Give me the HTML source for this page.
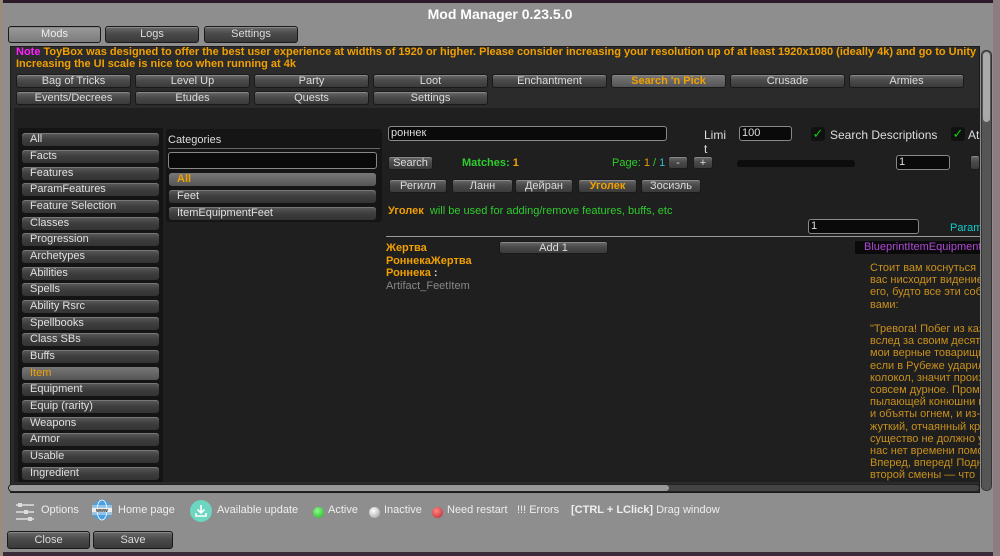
<!DOCTYPE html><html><head><meta charset="utf-8"><style>
*{margin:0;padding:0;box-sizing:border-box}
body{width:1000px;height:556px;overflow:hidden;background:#3a2a3a;font-family:"Liberation Sans","DejaVu Sans",sans-serif;font-size:11px;position:relative}
.a{position:absolute;white-space:nowrap}
.b{position:absolute;background:linear-gradient(#6a6a6a,#4a4a4a 45%,#3a3a3a);border:1px solid #1a1a1a;border-radius:3px;color:#ddd;text-align:center;font-size:11px;line-height:12px;box-shadow:inset 0 1px 0 #888}
.li{position:absolute;left:22px;width:137px;height:13px;background:linear-gradient(#5a5a5a,#3e3e3e 50%,#333);border-radius:3px;color:#e0e0e0;font-size:11px;line-height:13px;padding-left:8px;box-shadow:inset 0 1px 0 #777}
.inp{position:absolute;background:#0a0a0a;border:1px solid #888;border-radius:3px;color:#ddd;font-size:11px;line-height:12px;padding-left:2px}
.o{color:#f0a000}
.g{color:#2ecc2e}
</style></head><body>
<div class="a" style="left:0;top:0;width:1000px;height:4px;background:#2a1a2a"></div>
<div class="a" style="left:0;top:0;width:3px;height:556px;background:#9a8c7a"></div>
<div class="a" style="left:993px;top:0;width:7px;height:556px;background:#8c7c80"></div>
<div class="a" style="left:3px;top:3px;width:990px;height:549px;background:#8e8e8e"></div>
<div class="a" style="left:0;top:6px;width:1000px;text-align:center;color:#fff;font-weight:bold;font-size:14px">Mod Manager 0.23.5.0</div>
<div class="b" style="left:8px;top:26px;width:93px;height:17px;line-height:15px;background:linear-gradient(#9a9a9a,#7c7c7c);color:#eee">Mods</div>
<div class="b" style="left:105px;top:26px;width:94px;height:17px;line-height:15px">Logs</div>
<div class="b" style="left:204px;top:26px;width:94px;height:17px;line-height:15px">Settings</div>
<div class="a" style="left:10px;top:46px;width:970px;height:447px;background:#2b2b2b;border:1px solid #1a1a1a"></div>
<div class="a" style="left:981px;top:50px;width:11px;height:441px;background:#555;border-radius:5px;border:1px solid #333"></div>
<div class="a" style="left:983px;top:52px;width:7px;height:70px;background:#aaa;border-radius:4px"></div>
<div class="a" style="left:16px;top:47px;width:962px;overflow:hidden;font-weight:bold;color:#f0a000;font-size:11px;line-height:11.5px"><span style="color:#ff20ff">Note</span> ToyBox was designed to offer the best user experience at widths of 1920 or higher. Please consider increasing your resolution up of at least 1920x1080 (ideally 4k) and go to Unity<br>Increasing the UI scale is nice too when running at 4k</div>
<div class="b" style="left:16px;top:74px;width:115px;height:14px">Bag of Tricks</div>
<div class="b" style="left:135px;top:74px;width:115px;height:14px">Level Up</div>
<div class="b" style="left:254px;top:74px;width:115px;height:14px">Party</div>
<div class="b" style="left:373px;top:74px;width:115px;height:14px">Loot</div>
<div class="b" style="left:492px;top:74px;width:115px;height:14px">Enchantment</div>
<div class="b" style="left:611px;top:74px;width:115px;height:14px;color:#f0a000;font-weight:bold;background:linear-gradient(#777,#555)">Search 'n Pick</div>
<div class="b" style="left:730px;top:74px;width:115px;height:14px">Crusade</div>
<div class="b" style="left:849px;top:74px;width:115px;height:14px">Armies</div>
<div class="b" style="left:16px;top:91px;width:115px;height:14px">Events/Decrees</div>
<div class="b" style="left:135px;top:91px;width:115px;height:14px">Etudes</div>
<div class="b" style="left:254px;top:91px;width:115px;height:14px">Quests</div>
<div class="b" style="left:373px;top:91px;width:115px;height:14px">Settings</div>
<div class="a" style="left:14px;top:108px;width:966px;height:374px;background:#1f1f1f"></div>
<div class="a" style="left:18px;top:128px;width:145px;height:354px;background:#141414"></div>
<div class="li" style="top:133px">All</div>
<div class="li" style="top:150px">Facts</div>
<div class="li" style="top:167px">Features</div>
<div class="li" style="top:183px">ParamFeatures</div>
<div class="li" style="top:200px">Feature Selection</div>
<div class="li" style="top:217px">Classes</div>
<div class="li" style="top:233px">Progression</div>
<div class="li" style="top:250px">Archetypes</div>
<div class="li" style="top:267px">Abilities</div>
<div class="li" style="top:283px">Spells</div>
<div class="li" style="top:300px">Ability Rsrc</div>
<div class="li" style="top:317px">Spellbooks</div>
<div class="li" style="top:333px">Class SBs</div>
<div class="li" style="top:350px">Buffs</div>
<div class="li" style="top:367px;color:#f0a000;background:linear-gradient(#777,#555)">Item</div>
<div class="li" style="top:383px">Equipment</div>
<div class="li" style="top:400px">Equip (rarity)</div>
<div class="li" style="top:417px">Weapons</div>
<div class="li" style="top:433px">Armor</div>
<div class="li" style="top:450px">Usable</div>
<div class="li" style="top:467px">Ingredient</div>
<div class="a" style="left:166px;top:129px;width:216px;height:93px;background:#151515;border-radius:3px"></div>
<div class="a" style="left:168px;top:134px;color:#ddd">Categories</div>
<div class="a" style="left:168px;top:148px;width:212px;height:1px;background:#666"></div>
<div class="inp" style="left:168px;top:152px;width:209px;height:17px"></div>
<div class="li" style="left:169px;width:207px;top:173px;color:#f0a000;font-weight:bold;background:linear-gradient(#777,#555)">All</div>
<div class="li" style="left:169px;width:207px;top:190px">Feet</div>
<div class="li" style="left:169px;width:207px;top:207px">ItemEquipmentFeet</div>
<div class="inp" style="left:388px;top:126px;width:279px;height:15px">роннек</div>
<div class="a" style="left:704px;top:128px;color:#ddd;font-size:12px;line-height:14px">Limi<br>t</div>
<div class="inp" style="left:739px;top:126px;width:53px;height:15px">100</div>
<div class="a" style="left:811px;top:127px;width:14px;height:14px;background:#111;border-radius:3px;color:#1c1;font-size:13px;line-height:14px;text-align:center;font-weight:bold">✓</div>
<div class="a" style="left:830px;top:128px;color:#ddd;font-size:12px">Search Descriptions</div>
<div class="a" style="left:951px;top:127px;width:14px;height:14px;background:#111;border-radius:3px;color:#1c1;font-size:13px;line-height:14px;text-align:center;font-weight:bold">✓</div>
<div class="a" style="left:968px;top:128px;color:#ddd;font-size:12px;width:12px;overflow:hidden">At</div>
<div class="b" style="left:388px;top:156px;width:45px;height:14px">Search</div>
<div class="a g" style="left:462px;top:157px;font-weight:bold">Matches: <span class="o">1</span></div>
<div class="a g" style="left:612px;top:157px">Page: <span class="o">1</span> / <span style="color:#3bc">1</span></div>
<div class="b" style="left:668px;top:156px;width:20px;height:13px">-</div>
<div class="b" style="left:693px;top:156px;width:20px;height:13px">+</div>
<div class="a" style="left:737px;top:160px;width:118px;height:7px;background:#0d0d0d;border-radius:3px"></div>
<div class="inp" style="left:896px;top:155px;width:54px;height:15px">1</div>
<div class="b" style="left:970px;top:155px;width:10px;height:15px"></div>
<div class="b" style="left:389px;top:179px;width:58px;height:14px">Регилл</div>
<div class="b" style="left:452px;top:179px;width:61px;height:14px">Ланн</div>
<div class="b" style="left:515px;top:179px;width:58px;height:14px">Дейран</div>
<div class="b" style="left:578px;top:179px;width:59px;height:14px;color:#f0a000;font-weight:bold">Уголек</div>
<div class="b" style="left:641px;top:179px;width:60px;height:14px">Зосиэль</div>
<div class="a" style="left:388px;top:205px"><b class="o">Уголек</b> <span class="g">&nbsp;will be used for adding/remove features, buffs, etc</span></div>
<div class="inp" style="left:808px;top:219px;width:111px;height:15px">1</div>
<div class="a" style="left:950px;top:222px;color:#1cc;width:30px;overflow:hidden">Param</div>
<div class="a" style="left:386px;top:236px;width:594px;height:1px;background:#999"></div>
<div class="a o" style="left:386px;top:242px;font-weight:bold;line-height:12.5px">Жертва<br>РоннекаЖертва<br>Роннека <span style="color:#ddd">:</span></div>
<div class="a" style="left:386px;top:280px;color:#888">Artifact_FeetItem</div>
<div class="b" style="left:499px;top:241px;width:109px;height:13px">Add 1</div>
<div class="a" style="left:855px;top:241px;width:125px;height:13px;background:#0a0a0a;color:#b04ad8;overflow:hidden;padding-left:9px;line-height:13px">BlueprintItemEquipment</div>
<div class="a" style="left:870px;top:262px;width:110px;overflow:hidden;color:#c8901c;line-height:12.2px;font-size:11px">Стоит вам коснуться<br>вас нисходит видение<br>его, будто все эти собы<br>вами:<br><br>"Тревога! Побег из каз<br>вслед за своим десятн<br>мои верные товарищи<br>если в Рубеже ударил<br>колокол, значит произо<br>совсем дурное. Промч<br>пылающей конюшни и<br>и объяты огнем, и из-з<br>жуткий, отчаянный кри<br>существо не должно у<br>нас нет времени помо<br>Вперед, вперед! Подн<br>второй смены — что</div>
<div class="a" style="left:8px;top:484px;width:972px;height:8px;background:#444;border-radius:4px;border:1px solid #222"></div>
<div class="a" style="left:9px;top:485px;width:660px;height:6px;background:#999;border-radius:3px"></div>
<svg class="a" style="left:14px;top:502px" width="22" height="20" viewBox="0 0 22 20"><g stroke="#ddd" stroke-width="1.5"><line x1="2" y1="3" x2="20" y2="3"/><line x1="2" y1="10" x2="20" y2="10"/><line x1="2" y1="17" x2="20" y2="17"/></g><rect x="4" y="1" width="4" height="4" fill="#ddd"/><rect x="10" y="8" width="4" height="4" fill="#ddd"/><rect x="14" y="15" width="4" height="4" fill="#ddd"/></svg>
<div class="a" style="left:41px;top:504px;color:#eee">Options</div>
<svg class="a" style="left:91px;top:499px" width="22" height="22" viewBox="0 0 22 22"><circle cx="11" cy="11" r="10" fill="#4aa0e0"/><ellipse cx="11" cy="11" rx="5" ry="10" fill="none" stroke="#fff" stroke-width=".8"/><line x1="1" y1="7" x2="21" y2="7" stroke="#fff" stroke-width=".8"/><line x1="1" y1="15" x2="21" y2="15" stroke="#fff" stroke-width=".8"/><rect x="1" y="8.5" width="20" height="5" fill="#eee"/><text x="11" y="13" font-size="5" font-weight="bold" text-anchor="middle" fill="#222" font-family="Liberation Sans">www</text></svg>
<div class="a" style="left:118px;top:504px;color:#eee">Home page</div>
<svg class="a" style="left:190px;top:500px" width="22" height="22" viewBox="0 0 22 22"><circle cx="11" cy="11" r="11" fill="#6cd6c0"/><path d="M11 5v8M7.5 9.5L11 13l3.5-3.5M6 13v3h10v-3" stroke="#fff" stroke-width="1.6" fill="none"/></svg>
<div class="a" style="left:217px;top:504px;color:#eee">Available update</div>
<div class="a" style="left:313px;top:507px;width:11px;height:11px;border-radius:50%;background:radial-gradient(circle at 40% 35%,#8f8,#2a2)"></div>
<div class="a" style="left:328px;top:504px;color:#eee">Active</div>
<div class="a" style="left:369px;top:507px;width:11px;height:11px;border-radius:50%;background:radial-gradient(circle at 40% 35%,#fff,#999)"></div>
<div class="a" style="left:384px;top:504px;color:#eee">Inactive</div>
<div class="a" style="left:432px;top:507px;width:11px;height:11px;border-radius:50%;background:radial-gradient(circle at 40% 35%,#f88,#b22)"></div>
<div class="a" style="left:447px;top:504px;color:#eee">Need restart</div>
<div class="a" style="left:517px;top:504px;color:#eee">!!! Errors</div>
<div class="a" style="left:571px;top:504px;color:#eee"><b>[CTRL + LClick]</b> Drag window</div>
<div class="b" style="left:7px;top:531px;width:83px;height:18px;line-height:16px">Close</div>
<div class="b" style="left:93px;top:531px;width:80px;height:18px;line-height:16px">Save</div>
</body></html>
